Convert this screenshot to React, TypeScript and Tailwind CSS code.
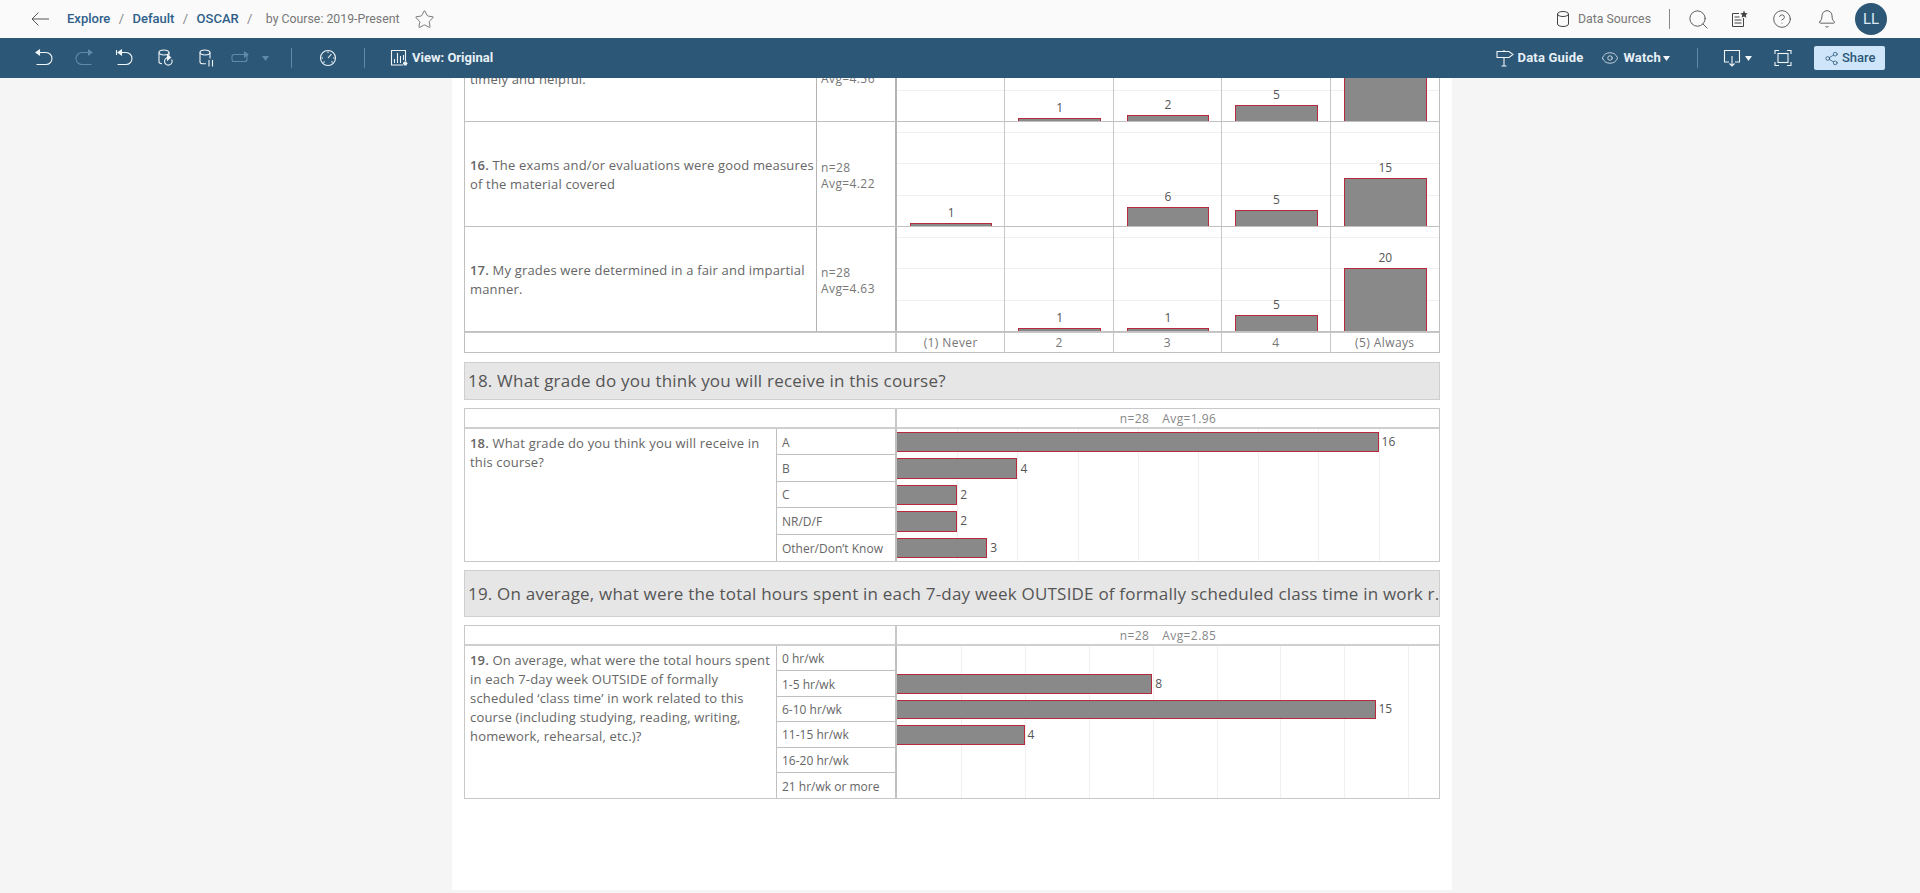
import React from 'react';
import { Star, Search, CircleHelp, Bell, Eye, Share2 } from 'lucide-react';

const bookFont = "font-['Open_Sans',sans-serif]";

const Caret = ({ className }: { className: string }) => (
  <svg width="7" height="5" viewBox="0 0 7 5" className={className}>
    <path d="M0 0h7L3.5 5z" fill="currentColor" />
  </svg>
);

const ToolIcon = ({ className, children }: { className: string; children: React.ReactNode }) => (
  <svg width="18" height="18" viewBox="0 0 18 18" fill="none" stroke="currentColor" strokeWidth="1.1" className={`shrink-0 ${className}`}>
    {children}
  </svg>
);

const Slash = () => <span className="mx-[8.400px] font-normal text-[#888]">/</span>;

const TopBar = () => (
  <div className="flex h-[38px] items-center bg-[#fafafa] pl-[31px] pr-[33px] font-['Roboto',sans-serif] text-[12.300px]">
    <svg width="18" height="14" viewBox="0 0 18 14" fill="none" stroke="#555" className="shrink-0">
      <path d="M18 7H1M7.500 0.500L1 7l6.500 6.500" />
    </svg>
    <div className="ml-[18px] flex items-center text-[13px] font-medium text-[#2e5f8a]">
      <span>Explore</span>
      <Slash />
      <span>Default</span>
      <Slash />
      <span>OSCAR</span>
      <Slash />
    </div>
    <span className="ml-[5px] text-[#777]">by Course: 2019-Present</span>
    <Star size={21} strokeWidth={0.9} className="ml-[15px] text-[#555]" />
    <div className="ml-auto flex items-center text-[#777]">
      <svg width="12" height="16" viewBox="0 0 12 16" fill="none" stroke="#444">
        <ellipse cx="6" cy="3" rx="5.500" ry="2.500" />
        <path d="M0.500 3v10c0 1.400 2.500 2.500 5.500 2.500s5.500-1.100 5.500-2.500V3" />
      </svg>
      <span className="ml-[9px]">Data Sources</span>
      <span className="ml-[18px] h-[20px] w-px bg-[#888]" />
      <Search size={23} strokeWidth={0.9} className="ml-[17px] text-[#444]" />
      <svg width="18" height="18" viewBox="0 0 18 18" fill="none" stroke="#444" className="ml-[20px]">
        <path d="M13.500 8v8.500h-11V3.500H9M4.500 7h5M4.500 10h7M4.500 13h7" />
        <path d="M14 0.500l1.100 2.500 2.700.3-2 1.800.6 2.700-2.400-1.400-2.400 1.400.6-2.700-2-1.800 2.700-.3z" fill="#444" stroke="none" />
      </svg>
      <CircleHelp size={20} strokeWidth={1} className="ml-[24px] text-[#444]" />
      <Bell size={20} strokeWidth={1} className="ml-[25px] text-[#444]" />
      <div className="ml-[18px] flex h-[32px] w-[32px] items-center justify-center rounded-full bg-[#2c5777] text-[15px] text-[#dbe9f4]">LL</div>
    </div>
  </div>
);

const ToolBar = () => (
  <div className="flex h-[40px] items-center bg-[#2c5777] pl-[35px] pr-[35px] font-['Roboto',sans-serif] text-[13px] font-bold text-[#e8f0f6]">
    <ToolIcon className="text-[#f0f5f8]">
      <path d="M3 3.500h8a5.500 5.500 0 0 1 0 12H1.500" />
      <path d="M1 3.500L4.500 1v5z" fill="currentColor" />
    </ToolIcon>
    <ToolIcon className="ml-[22px] text-[#5f8aa8]">
      <path d="M15 3.500H7a5.500 5.500 0 0 0 0 12h9.500" />
      <path d="M17 3.500L13.500 1v5z" fill="currentColor" />
    </ToolIcon>
    <ToolIcon className="ml-[22px] text-[#f0f5f8]">
      <path d="M1.500 1v5M5 3.500h6a5.500 5.500 0 0 1 0 12H2.500" />
      <path d="M3 3.500L6.500 1v5z" fill="currentColor" />
    </ToolIcon>
    <ToolIcon className="ml-[24px] text-[#f0f5f8]">
      <ellipse cx="7" cy="3.500" rx="5" ry="2.500" />
      <path d="M2 3.500v9.500c0 1 1.200 1.600 3 1.800M12 3.500v3" />
      <path d="M14.700 10.500a3.800 3.800 0 1 1-3.700-2" />
      <path d="M10.500 6l3 2.500-3 2.500z" fill="currentColor" />
    </ToolIcon>
    <ToolIcon className="ml-[23px] text-[#f0f5f8]">
      <ellipse cx="7" cy="3.500" rx="5" ry="2.500" />
      <path d="M2 3.500v9.500c0 1 1.500 1.800 3.500 1.800H8M12 3.500v6M11 11v6.500M14.500 11v6.500" />
    </ToolIcon>
    <ToolIcon className="ml-[15px] text-[#5f8aa8]">
      <path d="M15 5.500H3a2 2 0 0 0-2 2v3a2 2 0 0 0 2 2h11a2 2 0 0 0 2-2V6" />
      <path d="M17 5.500L13.500 3v5z" fill="currentColor" />
    </ToolIcon>
    <Caret className="ml-[13px] text-[#5f8aa8]" />
    <span className="ml-[22px] h-[20px] w-px bg-[#5f8aa8]" />
    <ToolIcon className="ml-[27px] text-[#f0f5f8]">
      <circle cx="9" cy="9" r="7.500" />
      <path d="M9 9l3.500-4M9 2.500v1.500M2.500 9h1.500M14 9h1.500M4.500 13.500l1-1M13.500 13.500l-1-1" />
    </ToolIcon>
    <span className="ml-[27px] h-[20px] w-px bg-[#5f8aa8]" />
    <ToolIcon className="ml-[25px] text-[#f0f5f8]">
      <path d="M13 16H1.500V1.500h14V12M4.500 14V10M7.500 14V4M10.500 14V7M13.500 11V6" />
      <path d="M13 14.500h4.500M15.200 12.300v4.500M13.600 12.900l3.200 3.200M16.800 12.900l-3.200 3.200" />
    </ToolIcon>
    <span className="ml-[4px]">View: Original</span>
    <div className="ml-auto flex items-center">
      <ToolIcon className="text-[#f0f5f8]">
        <path d="M1 2.500h12l4 3-4 3H1zM8 8.500V17M5.500 17h5M8 1v1.500" />
      </ToolIcon>
      <span className="ml-[4px] tracking-[0.2px]">Data Guide</span>
      <Eye size={18} strokeWidth={1} className="ml-[18px] text-[#f0f5f8]" />
      <span className="ml-[4px] tracking-[0.2px]">Watch</span>
      <Caret className="ml-[2px] text-[#f0f5f8]" />
      <span className="ml-[27px] h-[20px] w-px bg-[#5f8aa8]" />
      <ToolIcon className="ml-[25px] text-[#f0f5f8]">
        <path d="M6 13H1.500V1.500h15V13H12M9 7v10M6.500 14.500L9 17l2.500-2.500" />
      </ToolIcon>
      <Caret className="ml-[4px] text-[#f0f5f8]" />
      <ToolIcon className="ml-[22px] text-[#f0f5f8]">
        <path d="M1 5V1.500h4M13 1.500h4V5M17 13v3.500h-4M5 16.500H1V13" />
        <rect x="4" y="4.500" width="10" height="9" />
      </ToolIcon>
      <div className="ml-[22px] flex h-[24px] w-[71px] items-center rounded-[2px] bg-[#cfe6fa] pl-[10px] font-medium text-[#2c5777]">
        <Share2 size={15} strokeWidth={1.250} />
        <span className="ml-[3px]">Share</span>
      </div>
    </div>
  </div>
);

// one column of the likert charts
type BarCol = { value: number | null; h: number };

const rows = [
  {
    question: '15.',
    text: 'Instructor feedback on exams and assignments was timely and helpful.',
    avg: 'Avg=4.56',
    bars: [
      { value: null, h: 0 },
      { value: 1, h: 3 },
      { value: 2, h: 6 },
      { value: 5, h: 16 },
      { value: 20, h: 63 },
    ],
  },
  {
    question: '16.',
    text: 'The exams and/or evaluations were good measures of the material covered',
    avg: 'Avg=4.22',
    bars: [
      { value: 1, h: 3 },
      { value: null, h: 0 },
      { value: 6, h: 19 },
      { value: 5, h: 16 },
      { value: 15, h: 48 },
    ],
  },
  {
    question: '17.',
    text: 'My grades were determined in a fair and impartial manner.',
    avg: 'Avg=4.63',
    bars: [
      { value: null, h: 0 },
      { value: 1, h: 3 },
      { value: 1, h: 3 },
      { value: 5, h: 16 },
      { value: 20, h: 63 },
    ],
  },
];

const ChartCell = ({ bar }: { bar: BarCol }) => (
  <div className="relative flex flex-col items-center justify-end border-r border-[#c8c8c8] pl-[13px] pr-[12px] last:border-r-0">
    {bar.value !== null && (
      <>
        <span className="mb-[2px] text-[12px] leading-[16px] text-[#555]">{bar.value}</span>
        <div className="w-full border border-b-0 border-[#b8293d] bg-[#898989]" style={{ height: bar.h }} />
      </>
    )}
  </div>
);

const LikertRow = ({ row }: { row: (typeof rows)[number] }) => (
  <div className="grid h-[105px] grid-cols-[352px_80px_1fr] border-b border-[#c0c0c0] last:border-b-0">
    <div className="flex items-center border-r border-[#b4b4b4] pl-[5px] pt-[2px] text-[13px] leading-[19px] tracking-[0.18px] text-[#666]">
      <p>
        <span className="font-semibold">{row.question}</span> {row.text}
      </p>
    </div>
    <div className="flex flex-col justify-center border-r-2 border-[#b4b4b4] pl-[4px] pt-[4px] text-[12px] leading-[16px] tracking-[0.4px] text-[#777]">
      <span>n=28</span>
      <span>{row.avg}</span>
    </div>
    <div className="relative grid grid-cols-5">
      {/* faint horizontal gridlines behind the bars */}
      <div className="absolute inset-x-0 top-[10px] h-px bg-[#f0f0f0]" />
      <div className="absolute inset-x-0 top-[41px] h-px bg-[#f0f0f0]" />
      <div className="absolute inset-x-0 top-[73px] h-px bg-[#f0f0f0]" />
      {row.bars.map((bar, i) => (
        <ChartCell key={i} bar={bar} />
      ))}
    </div>
  </div>
);

const Band = ({ title, height }: { title: string; height: string }) => (
  <div className={`flex items-center border border-[#cfcfcf] bg-[#e6e6e6] pl-[3px] text-[17px] tracking-[0.2px] text-[#555] ${height}`}>
    <span className="whitespace-nowrap">{title}</span>
  </div>
);

type HBarRow = { label: string; value: number | null };

const HBarTable = ({
  number,
  text,
  avg,
  data,
  unit,
  rowH,
  gridStep,
}: {
  number: string;
  text: string;
  avg: string;
  data: HBarRow[];
  unit: number;
  rowH: string;
  gridStep: number;
}) => (
  <div className="border border-[#c8c8c8]">
    <div className="grid h-[20px] grid-cols-[432px_1fr] border-b-2 border-[#cfcfcf]">
      <div className="border-r-2 border-[#c8c8c8]" />
      <div className="flex justify-center gap-[13px] text-[12px] leading-[20px] tracking-[0.4px] text-[#888]">
        <span>n=28</span>
        <span>{avg}</span>
      </div>
    </div>
    <div className="grid grid-cols-[312px_120px_1fr]">
      <div className="border-r border-[#c0c0c0] pl-[5px] pt-[5px] text-[13px] leading-[19px] tracking-[0.18px] text-[#666]">
        <span className="font-semibold">{number}</span> {text}
      </div>
      <div className="border-r-2 border-[#c0c0c0]">
        {data.map((d) => (
          <div key={d.label} className={`flex items-center border-b border-[#c0c0c0] pl-[5px] pt-[2px] text-[12px] text-[#666] last:border-b-0 ${rowH}`}>
            {d.label}
          </div>
        ))}
      </div>
      <div className="relative">
        {Array.from({ length: 8 }).map((_, i) => (
          <div key={i} className="absolute inset-y-0 w-px bg-[#f0f0f0]" style={{ left: gridStep * (i + 1) }} />
        ))}
        {data.map((d) => (
          <div key={d.label} className={`relative flex items-center py-[3px] ${rowH}`}>
            {d.value !== null && (
              <>
                <div className="h-full border border-l-0 border-[#b8293d] bg-[#898989]" style={{ width: d.value * unit }} />
                <span className="ml-[3px] text-[12px] text-[#555]">{d.value}</span>
              </>
            )}
          </div>
        ))}
      </div>
    </div>
  </div>
);

export default function App() {
  return (
    <div className={`flex h-screen flex-col overflow-hidden bg-[#f5f5f5] ${bookFont}`}>
      <TopBar />
      <ToolBar />
      <div className="min-h-0 flex-1 overflow-hidden">
        {/* the sheet is scrolled down, its first row is cut by the toolbar */}
        <div className="ml-[452px] -mt-[62px] w-[1000px] bg-white px-[12px] pb-[91px]">
          <div className="border border-[#c0c0c0]">
            {rows.map((r) => (
              <LikertRow key={r.question} row={r} />
            ))}
            <div className="grid h-[20px] grid-cols-[432px_1fr] border-t border-[#c8c8c8]">
              <div className="border-r-2 border-[#c8c8c8]" />
              <div className="grid grid-cols-5 text-center text-[12px] leading-[20px] tracking-[0.4px] text-[#777]">
                <span className="border-r border-[#c8c8c8]">(1) Never</span>
                <span className="border-r border-[#c8c8c8]">2</span>
                <span className="border-r border-[#c8c8c8]">3</span>
                <span className="border-r border-[#c8c8c8]">4</span>
                <span>(5) Always</span>
              </div>
            </div>
          </div>
          <div className="mt-[9px]">
            <Band title="18. What grade do you think you will receive in this course?" height="h-[38px]" />
          </div>
          <div className="mt-[8px]">
            <HBarTable
              number="18."
              text="What grade do you think you will receive in this course?"
              avg="Avg=1.96"
              unit={30.1}
              rowH="h-[26.400px]"
              gridStep={60.2}
              data={[
                { label: 'A', value: 16 },
                { label: 'B', value: 4 },
                { label: 'C', value: 2 },
                { label: 'NR/D/F', value: 2 },
                { label: 'Other/Don\u2019t Know', value: 3 },
              ]}
            />
          </div>
          <div className="mt-[8px]">
            <Band title="19. On average, what were the total hours spent in each 7-day week OUTSIDE of formally scheduled class time in work r." height="h-[47px]" />
          </div>
          <div className="mt-[8px]">
            <HBarTable
              number="19."
              text={'On average, what were the total hours spent in each 7-day week OUTSIDE of formally scheduled \u2018class time\u2019 in work related to this course (including studying, reading, writing, homework, rehearsal, etc.)?'}
              avg="Avg=2.85"
              unit={31.9}
              rowH="h-[25.400px]"
              gridStep={63.9}
              data={[
                { label: '0 hr/wk', value: null },
                { label: '1-5 hr/wk', value: 8 },
                { label: '6-10 hr/wk', value: 15 },
                { label: '11-15 hr/wk', value: 4 },
                { label: '16-20 hr/wk', value: null },
                { label: '21 hr/wk or more', value: null },
              ]}
            />
          </div>
        </div>
      </div>
    </div>
  );
}
